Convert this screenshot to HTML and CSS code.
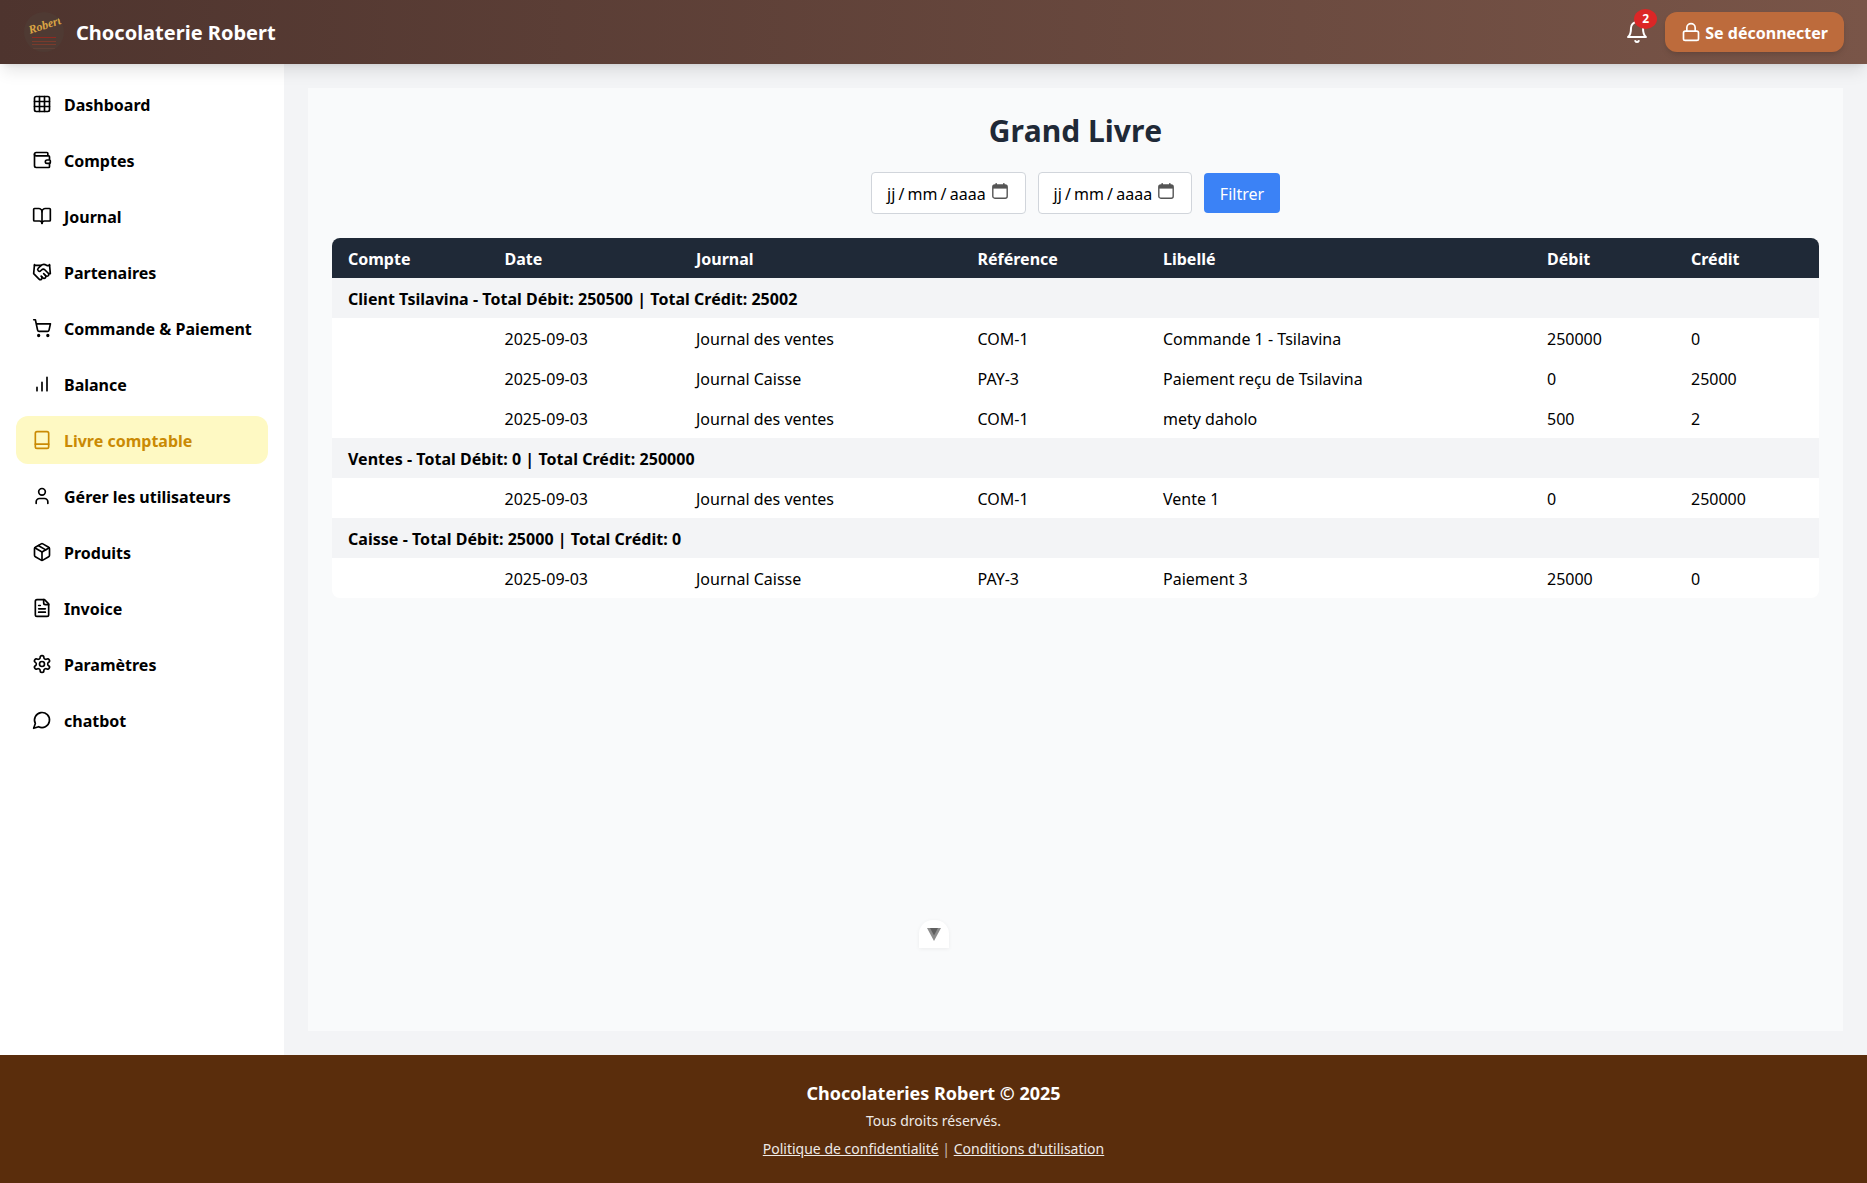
FILE: index.html
```html
<!DOCTYPE html>
<html lang="fr">
<head>
<meta charset="utf-8">
<title>Grand Livre</title>
<link rel="stylesheet" href="styles.css">
</head>
<body>
<header class="topbar">
  <div class="brand">
    <div class="logo">
      <svg viewBox="0 0 40 40" width="40" height="40">
        <text x="6" y="22" transform="rotate(-18 6 22)" class="logo-script">Robert</text>
        <rect x="8" y="25" width="24" height="1" class="logo-line"/>
        <rect x="8" y="29" width="24" height="1" class="logo-line-dim"/>
        <rect x="8" y="32" width="24" height="1" class="logo-line-dim"/>
        <rect x="9" y="36" width="22" height="1" class="logo-line-faint"/>
      </svg>
    </div>
    <span class="brand-name">Chocolaterie Robert</span>
  </div>
  <div class="top-actions">
    <div class="bell">
      <svg class="ico ico-24" viewBox="0 0 24 24"><path d="M6 8a6 6 0 0 1 12 0c0 7 3 9 3 9H3s3-2 3-9"/><path d="M10.3 21a1.94 1.94 0 0 0 3.4 0"/></svg>
      <span class="badge">2</span>
    </div>
    <button class="logout" type="button">
      <svg class="ico" viewBox="0 0 24 24"><rect x="3" y="11" width="18" height="11" rx="2"/><path d="M7 11V7a5 5 0 0 1 10 0v4"/></svg>
      <span>Se déconnecter</span>
    </button>
  </div>
</header>

<div class="shell">
  <nav class="sidebar">
    <a class="nav-item"><svg class="ico" viewBox="0 0 24 24"><rect x="3" y="3" width="18" height="18" rx="2"/><path d="M3 9h18M3 15h18M9 3v18M15 3v18"/></svg><span>Dashboard</span></a>
    <a class="nav-item"><svg class="ico" viewBox="0 0 24 24"><path d="M19 7V4a1 1 0 0 0-1-1H5a2 2 0 0 0 0 4h15a1 1 0 0 1 1 1v4h-3a2 2 0 0 0 0 4h3a1 1 0 0 0 1-1v-2a1 1 0 0 0-1-1"/><path d="M3 5v14a2 2 0 0 0 2 2h15a1 1 0 0 0 1-1v-4"/></svg><span>Comptes</span></a>
    <a class="nav-item"><svg class="ico" viewBox="0 0 24 24"><path d="M12 7v14"/><path d="M3 18a1 1 0 0 1-1-1V4a1 1 0 0 1 1-1h5a4 4 0 0 1 4 4 4 4 0 0 1 4-4h5a1 1 0 0 1 1 1v13a1 1 0 0 1-1 1h-6a3 3 0 0 0-3 3 3 3 0 0 0-3-3z"/></svg><span>Journal</span></a>
    <a class="nav-item"><svg class="ico" viewBox="0 0 24 24"><path d="m11 17 2 2a1 1 0 1 0 3-3"/><path d="m14 14 2.5 2.5a1 1 0 1 0 3-3l-3.88-3.88a3 3 0 0 0-4.24 0l-.88.88a1 1 0 1 1-3-3l2.81-2.81a5.79 5.79 0 0 1 7.06-.87l.47.28a2 2 0 0 0 1.42.25L21 4"/><path d="m21 3 1 11h-2"/><path d="M3 3 2 14l6.5 6.5a1 1 0 1 0 3-3"/><path d="M3 4h8"/></svg><span>Partenaires</span></a>
    <a class="nav-item"><svg class="ico" viewBox="0 0 24 24"><circle cx="8" cy="21" r="1"/><circle cx="19" cy="21" r="1"/><path d="M2.05 2.05h2l2.66 12.42a2 2 0 0 0 2 1.58h9.78a2 2 0 0 0 1.95-1.57l1.65-7.43H5.12"/></svg><span>Commande &amp; Paiement</span></a>
    <a class="nav-item"><svg class="ico" viewBox="0 0 24 24"><path d="M12 20V10M18 20V4M6 20v-4"/></svg><span>Balance</span></a>
    <a class="nav-item is-active"><svg class="ico" viewBox="0 0 24 24"><rect x="4" y="2" width="16" height="20" rx="2"/><path d="M4 17h16"/></svg><span>Livre comptable</span></a>
    <a class="nav-item"><svg class="ico" viewBox="0 0 24 24"><path d="M19 21v-2a4 4 0 0 0-4-4H9a4 4 0 0 0-4 4v2"/><circle cx="12" cy="7" r="4"/></svg><span>Gérer les utilisateurs</span></a>
    <a class="nav-item"><svg class="ico" viewBox="0 0 24 24"><path d="m7.5 4.27 9 5.15"/><path d="M21 8a2 2 0 0 0-1-1.73l-7-4a2 2 0 0 0-2 0l-7 4A2 2 0 0 0 3 8v8a2 2 0 0 0 1 1.73l7 4a2 2 0 0 0 2 0l7-4A2 2 0 0 0 21 16Z"/><path d="m3.3 7 8.7 5 8.7-5"/><path d="M12 22V12"/></svg><span>Produits</span></a>
    <a class="nav-item"><svg class="ico" viewBox="0 0 24 24"><path d="M15 2H6a2 2 0 0 0-2 2v16a2 2 0 0 0 2 2h12a2 2 0 0 0 2-2V7Z"/><path d="M14 2v4a2 2 0 0 0 2 2h4"/><path d="M10 9H8M16 13H8M16 17H8"/></svg><span>Invoice</span></a>
    <a class="nav-item"><svg class="ico" viewBox="0 0 24 24"><path d="M12.22 2h-.44a2 2 0 0 0-2 2v.18a2 2 0 0 1-1 1.73l-.43.25a2 2 0 0 1-2 0l-.15-.08a2 2 0 0 0-2.73.73l-.22.38a2 2 0 0 0 .73 2.73l.15.1a2 2 0 0 1 1 1.72v.51a2 2 0 0 1-1 1.74l-.15.09a2 2 0 0 0-.73 2.73l.22.38a2 2 0 0 0 2.73.73l.15-.08a2 2 0 0 1 2 0l.43.25a2 2 0 0 1 1 1.73V20a2 2 0 0 0 2 2h.44a2 2 0 0 0 2-2v-.18a2 2 0 0 1 1-1.73l.43-.25a2 2 0 0 1 2 0l.15.08a2 2 0 0 0 2.73-.73l.22-.39a2 2 0 0 0-.73-2.73l-.15-.08a2 2 0 0 1-1-1.74v-.5a2 2 0 0 1 1-1.74l.15-.09a2 2 0 0 0 .73-2.73l-.22-.38a2 2 0 0 0-2.73-.73l-.15.08a2 2 0 0 1-2 0l-.43-.25a2 2 0 0 1-1-1.73V4a2 2 0 0 0-2-2z"/><circle cx="12" cy="12" r="3"/></svg><span>Paramètres</span></a>
    <a class="nav-item"><svg class="ico" viewBox="0 0 24 24"><path d="M7.9 20A9 9 0 1 0 4 16.1L2 22Z"/></svg><span>chatbot</span></a>
  </nav>

  <main class="content">
    <section class="panel">
      <h1 class="title">Grand Livre</h1>
      <div class="filters">
        <div class="date-field">
          <span class="date-text">jj / mm / aaaa</span>
          <svg class="cal" viewBox="0 0 16 16"><rect x="0.8" y="2" width="14.4" height="13.2" rx="2" class="cal-box"/><rect x="1" y="2" width="14" height="3.6" class="cal-fill"/><rect x="3.4" y="0.2" width="1.6" height="3" class="cal-fill"/><rect x="11" y="0.2" width="1.6" height="3" class="cal-fill"/></svg>
        </div>
        <div class="date-field">
          <span class="date-text">jj / mm / aaaa</span>
          <svg class="cal" viewBox="0 0 16 16"><rect x="0.8" y="2" width="14.4" height="13.2" rx="2" class="cal-box"/><rect x="1" y="2" width="14" height="3.6" class="cal-fill"/><rect x="3.4" y="0.2" width="1.6" height="3" class="cal-fill"/><rect x="11" y="0.2" width="1.6" height="3" class="cal-fill"/></svg>
        </div>
        <button class="filter-btn" type="button"><span class="btn-label">Filtrer</span></button>
      </div>
      <div class="table-wrap">
        <table class="ledger">
          <colgroup>
            <col class="c-compte"><col class="c-date"><col class="c-journal"><col class="c-ref"><col class="c-lib"><col class="c-num"><col class="c-num">
          </colgroup>
          <thead>
            <tr><th>Compte</th><th>Date</th><th>Journal</th><th>Référence</th><th>Libellé</th><th>Débit</th><th>Crédit</th></tr>
          </thead>
          <tbody>
            <tr class="group"><td colspan="7">Client Tsilavina - Total Débit: 250500 | Total Crédit: 25002</td></tr>
            <tr><td></td><td>2025-09-03</td><td>Journal des ventes</td><td>COM-1</td><td>Commande 1 - Tsilavina</td><td>250000</td><td>0</td></tr>
            <tr><td></td><td>2025-09-03</td><td>Journal Caisse</td><td>PAY-3</td><td>Paiement reçu de Tsilavina</td><td>0</td><td>25000</td></tr>
            <tr><td></td><td>2025-09-03</td><td>Journal des ventes</td><td>COM-1</td><td>mety daholo</td><td>500</td><td>2</td></tr>
            <tr class="group"><td colspan="7">Ventes - Total Débit: 0 | Total Crédit: 250000</td></tr>
            <tr><td></td><td>2025-09-03</td><td>Journal des ventes</td><td>COM-1</td><td>Vente 1</td><td>0</td><td>250000</td></tr>
            <tr class="group"><td colspan="7">Caisse - Total Débit: 25000 | Total Crédit: 0</td></tr>
            <tr><td></td><td>2025-09-03</td><td>Journal Caisse</td><td>PAY-3</td><td>Paiement 3</td><td>25000</td><td>0</td></tr>
          </tbody>
        </table>
      </div>
    </section>
  </main>
</div>

<div class="float-tab">
  <svg viewBox="0 0 14 13" width="14" height="13"><polygon points="0,0 14,0 7,13" class="v-outer"/><polygon points="3,0 11,0 7,7.5" class="v-inner"/></svg>
</div>

<footer class="footer">
  <div class="foot-title">Chocolateries Robert © 2025</div>
  <div class="foot-sub">Tous droits réservés.</div>
  <div class="foot-links"><a class="foot-link">Politique de confidentialité</a><span class="foot-sep"> | </span><a class="foot-link">Conditions d'utilisation</a></div>
</footer>
</body>
</html>
```
FILE: styles.css
```css
* { box-sizing: border-box; }
html, body { margin: 0; padding: 0; }
body {
  min-height: 100vh;
  display: flex;
  flex-direction: column;
  font-family: "Noto Sans", sans-serif;
  font-size: 16px;
  line-height: 24px;
  color: #000;
  background: #f3f4f6;
}

.ico {
  width: 20px;
  height: 20px;
  flex: none;
  fill: none;
  stroke: currentColor;
  stroke-width: 2;
  stroke-linecap: round;
  stroke-linejoin: round;
}
.ico-24 { width: 24px; height: 24px; display: block; }

/* Top bar */
.topbar {
  position: relative;
  z-index: 2;
  height: 64px;
  flex: none;
  padding: 0 23px 0 24px;
  display: flex;
  align-items: center;
  justify-content: space-between;
  color: #fff;
  background: linear-gradient(to right, #4e342e, #795548);
  box-shadow: 0 10px 15px -3px rgba(0,0,0,.1), 0 4px 6px -4px rgba(0,0,0,.1);
}
.brand { display: flex; align-items: center; gap: 12px; }
.logo { width: 40px; height: 40px; border-radius: 50%; background: #4f3a33; overflow: hidden; }
.logo svg { display: block; }
.logo-script { font-family: "Liberation Serif", serif; font-style: italic; font-weight: 700; font-size: 12px; fill: #dba544; }
.logo-line { fill: #8f2a22; }
.logo-line-dim { fill: #7a3a2c; }
.logo-line-faint { fill: #5f4036; }
.brand-name { padding-top: 2px; font-size: 20px; line-height: 28px; font-weight: 700; }
.top-actions { display: flex; align-items: center; gap: 16px; }
.bell { position: relative; width: 24px; height: 24px; }
.badge {
  position: absolute;
  top: -11px;
  left: 9px;
  width: 23px;
  height: 20px;
  border-radius: 50%;
  background: #dc2626;
  color: #fff;
  font-size: 12px;
  line-height: 20px;
  font-weight: 700;
  text-align: center;
}
.logout {
  height: 40px;
  padding: 0 16px;
  display: flex;
  align-items: center;
  gap: 4px;
  border: 0;
  border-radius: 12px;
  background: #bd6b3c;
  color: #fff;
  font: 700 16px/24px "Noto Sans", sans-serif;
  box-shadow: 0 4px 6px -1px rgba(0,0,0,.1), 0 2px 4px -2px rgba(0,0,0,.1);
}
.logout span { padding-top: 2px; }

/* Shell */
.shell { flex: 1; display: flex; min-height: 0; }
.sidebar {
  width: 284px;
  flex: none;
  padding: 16px;
  display: flex;
  flex-direction: column;
  gap: 8px;
  background: #fff;
}
.nav-item {
  height: 48px;
  padding: 0 16px;
  display: flex;
  align-items: center;
  gap: 12px;
  border-radius: 12px;
  font-weight: 700;
  color: #000;
}
.nav-item span { padding-top: 2px; }
.is-active { background: #fef9c3; color: #ca8a04; }

.content { flex: 1; min-width: 0; padding: 24px; display: flex; }
.panel { flex: 1; min-width: 0; padding: 24px; background: #f9fafb; }
.title {
  margin: 0 0 23px;
  padding-top: 1px;
  text-align: center;
  font-size: 30px;
  line-height: 36px;
  font-weight: 700;
  color: #1f2937;
  font-kerning: none;
}
.filters {
  display: flex;
  justify-content: center;
  align-items: center;
  gap: 12px;
  margin-bottom: 24px;
}
.date-field {
  width: 154.5px;
  height: 42px;
  padding: 2px 17px 0 15px;
  display: flex;
  align-items: center;
  justify-content: space-between;
  border: 1px solid #d1d5db;
  border-radius: 4px;
  background: #fff;
  color: #000;
}
.date-text { word-spacing: -1px; white-space: nowrap; }
.cal { width: 16px; height: 16px; flex: none; margin-top: -6px; }
.cal-box { fill: #fff; stroke: #555; stroke-width: 1.4; }
.cal-fill { fill: #555; }
.filter-btn {
  height: 40px;
  width: 76px;
  padding: 0;
  border: 0;
  border-radius: 4px;
  background: #3b82f6;
  color: #fff;
  font: 400 16px/24px "Noto Sans", sans-serif;
}
.btn-label { display: block; padding-top: 2px; }

/* Table */
.table-wrap {
  border-radius: 8px;
  overflow: hidden;
  background: #fff;
}
.ledger { width: 100%; border-collapse: collapse; table-layout: fixed; }
.c-compte { width: 156.5px; }
.c-date { width: 191.5px; }
.c-journal { width: 281.5px; }
.c-ref { width: 185.5px; }
.c-lib { width: 384px; }
.c-num { width: 144px; }
.ledger th {
  padding: 9px 16px 7px;
  text-align: left;
  font-weight: 700;
  color: #fff;
  background: #1f2937;
}
.ledger td { padding: 9px 16px 7px; height: 40px; color: #000; }
.ledger .group td { background: #f3f4f6; font-weight: 700; letter-spacing: .03px; }

/* Floating tab */
.float-tab {
  position: absolute;
  left: 919px;
  top: 920px;
  width: 30px;
  height: 28px;
  padding-top: 8px;
  display: flex;
  justify-content: center;
  background: #fff;
  border-radius: 14px 14px 0 0;
  box-shadow: 0 1px 4px rgba(0,0,0,.06);
}
.float-tab svg { display: block; }
.v-outer { fill: #8d8d8d; }
.v-inner { fill: #5f5f5f; }

/* Footer */
.footer {
  flex: none;
  height: 128px;
  padding: 24px;
  text-align: center;
  color: #fff;
  background: #5a2d0c;
}
.foot-title { font-size: 18px; line-height: 28px; font-weight: 700; }
.foot-sub { margin-top: 4px; font-size: 14px; line-height: 20px; opacity: .9; }
.foot-links { margin-top: 8px; font-size: 14px; line-height: 20px; opacity: .9; }
.foot-link { text-decoration: underline; }
.foot-sep { opacity: .75; }
```
